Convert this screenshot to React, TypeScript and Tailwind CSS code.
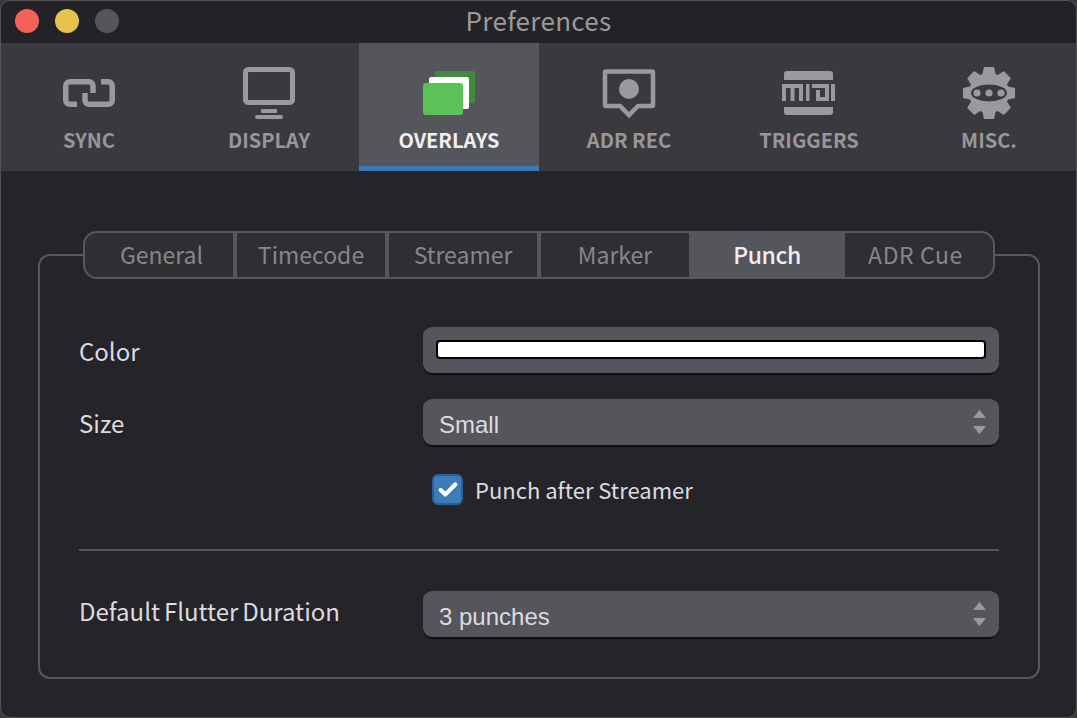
import React from 'react';
import { Check } from 'lucide-react';

const FG = '#9a999d';

const SyncIcon = () => (
  <svg viewBox="59 67 60 54" className="w-[60px] h-[54px]" fill="none" stroke={FG} strokeWidth={5.5}>
    <path d="M77 104.25H69.75a4 4 0 0 1-4-4V85.75a4 4 0 0 1 4-4H89a4 4 0 0 1 4 4V93" />
    <path d="M101 81.75H108.25a4 4 0 0 1 4 4V100.25a4 4 0 0 1-4 4H89a4 4 0 0 1-4-4V93" />
  </svg>
);

const DisplayIcon = () => (
  <svg viewBox="239 67 60 54" className="w-[60px] h-[54px]" fill={FG}>
    <rect x="245.5" y="69.5" width="47" height="33" rx="3" fill="none" stroke={FG} strokeWidth={5} />
    <rect x="261" y="109" width="16" height="4" rx="1" />
    <rect x="255" y="115" width="28" height="4" rx="2" />
  </svg>
);

const OverlaysIcon = () => (
  <svg viewBox="419 67 60 54" className="w-[60px] h-[54px]">
    <rect x="435" y="71" width="40" height="32" rx="2" fill="#3f8a3d" />
    <rect x="429" y="77" width="40" height="32" rx="2" fill="#ffffff" />
    <rect x="423" y="83" width="40" height="32" rx="3" fill="#5cc257" />
  </svg>
);

const AdrIcon = () => (
  <svg viewBox="599 67 60 54" className="w-[60px] h-[54px]">
    <path d="M606 71.5H652a1 1 0 0 1 1 1V105a1 1 0 0 1-1 1H638L629 115L620 106H606a1 1 0 0 1-1-1V72.5a1 1 0 0 1 1-1Z" fill="none" stroke={FG} strokeWidth={4.5} />
    <circle cx="629" cy="89" r="10" fill={FG} />
  </svg>
);

const MidiIcon = () => (
  <svg viewBox="779 67 60 54" className="w-[60px] h-[54px]" fill={FG}>
    <path d="M787 71H830a3 3 0 0 1 3 3V80H784V74a3 3 0 0 1 3-3Z" />
    <path d="M784 107H833V112a3 3 0 0 1-3 3H787a3 3 0 0 1-3-3Z" />
    <path d="M782 84H803V101H799V88H794.5V101H790.5V88H786V101H782Z" />
    <rect x="806" y="84" width="3.5" height="17" />
    <path d="M812 84H829V101H816V90H820V97H825V88H812Z" />
    <rect x="831" y="84" width="4" height="17" />
  </svg>
);

const MiscIcon = () => (
  <svg viewBox="959 67 60 54" className="w-[60px] h-[54px]">
    <circle cx="989" cy="93" r="20" fill={FG} />
    {[0, 45, 90, 135, 180, 225, 270, 315].map((deg) => (
      <path key={deg} d="M982 76L984 67H994L996 76Z" fill={FG} transform={`rotate(${deg} 989 93)`} />
    ))}
    <ellipse cx="989" cy="93" rx="18" ry="8.5" fill="#3a393e" />
    <circle cx="977" cy="93" r="3.6" fill={FG} />
    <circle cx="989" cy="93" r="3.6" fill={FG} />
    <circle cx="1001" cy="93" r="3.6" fill={FG} />
  </svg>
);

const toolbarItems = [
  { label: 'SYNC', icon: <SyncIcon /> },
  { label: 'DISPLAY', icon: <DisplayIcon /> },
  { label: 'OVERLAYS', icon: <OverlaysIcon />, active: true },
  { label: 'ADR REC', icon: <AdrIcon /> },
  { label: 'TRIGGERS', icon: <MidiIcon /> },
  { label: 'MISC.', icon: <MiscIcon /> },
];

const subTabs = [
  { label: 'General', className: 'w-[152px] border-r-4 border-[#58575d] pl-[5px] text-[#87868b]' },
  { label: 'Timecode', className: 'w-[152px] border-r-4 border-[#58575d] text-[#87868b]' },
  { label: 'Streamer', className: 'w-[152px] border-r-4 border-[#58575d] text-[#87868b]' },
  { label: 'Marker', className: 'w-[148px] text-[#87868b]' },
  { label: 'Punch', className: 'w-[156px] bg-[#55555c] font-medium tracking-[-0.4px] text-[#efeff1]' },
  { label: 'ADR Cue', className: 'w-[148px] pr-[7px] tracking-[0.6px] text-[#87868b]' },
];

const SelectBox = ({ value }: { value: string }) => (
  <div className="flex h-[46px] items-center justify-between rounded-[9px] bg-[#55555b] pl-4 pr-[13px] shadow-[0_2px_0_#111114]">
    <span className="font-['Liberation_Sans'] text-[24px] leading-none pt-[6px] text-[#dcdce0]">{value}</span>
    <svg viewBox="0 0 13 24" className="h-6 w-[13px]" fill="#9a9a9e">
      <path d="M6.5 0L13 8H0Z" />
      <path d="M6.5 24L0 16H13Z" />
    </svg>
  </div>
);

export default function App() {
  return (
    <div className="h-[718px] w-[1077px] overflow-hidden bg-[#3a3a3a] font-['Noto_Sans_CJK_SC','Noto_Sans',sans-serif]">
      <div className="flex h-full flex-col overflow-hidden rounded-[10px] border border-[#55545a] bg-[#252428]">
        <header className="relative flex h-[42px] shrink-0 items-center justify-center bg-[#232227]">
          <div className="absolute left-[14px] top-[8px] flex gap-4">
            <span className="h-6 w-6 rounded-full bg-[#f2625a]" />
            <span className="h-6 w-6 rounded-full bg-[#e7c24a]" />
            <span className="h-6 w-6 rounded-full bg-[#56555b]" />
          </div>
          <h1 className="pb-1 text-[26px] leading-none tracking-[0.3px] text-[#9b9a9e]">Preferences</h1>
        </header>

        <nav className="-ml-[2px] grid h-[128px] shrink-0 grid-cols-[repeat(6,180px)] bg-[#3a393e]">
          {toolbarItems.map((item) => (
            <div
              key={item.label}
              className={
                item.active
                  ? 'flex flex-col items-center border-b-[5px] border-[#3b7ab8] bg-[#55555c] pt-6'
                  : 'flex flex-col items-center border-b-[5px] border-transparent pt-6'
              }
            >
              {item.icon}
              <span
                className={
                  item.active
                    ? 'mt-[7px] text-[20px] font-bold leading-6 text-[#efeff1]'
                    : 'mt-[7px] text-[20px] font-bold leading-6 text-[#97969a]'
                }
              >
                {item.label}
              </span>
            </div>
          ))}
        </nav>

        <main className="flex flex-1 flex-col px-[37px] pt-[83px]">
          <section className="flex h-[425px] w-[1002px] flex-col rounded-[12px] border-2 border-[#58575d] px-[39px]">
            <div className="-mt-[25px] flex h-[48px] w-[912px] shrink-0 self-center overflow-hidden rounded-[14px] border-2 border-[#58575d] bg-[#2f2e33] text-[23px]">
              {subTabs.map((tab) => (
                <div key={tab.label} className={`flex items-center justify-center pb-[2px] ${tab.className}`}>
                  {tab.label}
                </div>
              ))}
            </div>

            <div className="mt-[48px] grid grid-cols-[344px_576px] items-center text-[24px] leading-[32px] text-[#dcdce0]">
              <span className="pt-[2px]">Color</span>
              <div className="flex h-[46px] items-center rounded-[9px] bg-[#55555b] px-[13px] pb-px shadow-[0_2px_0_#111114]">
                <div className="h-[19px] w-full rounded-[4px] border-2 border-black bg-white" />
              </div>
            </div>

            <div className="mt-[26px] grid grid-cols-[344px_576px] items-center text-[24px] leading-[32px] text-[#dcdce0]">
              <span className="pt-[2px]">Size</span>
              <SelectBox value="Small" />
            </div>

            <div className="ml-[353px] mt-[29px] flex h-[31px] items-center gap-3 text-[22px] leading-[32px] text-[#dcdce0]">
              <span className="flex h-[31px] w-[31px] items-center justify-center rounded-[6px] border-2 border-[#2f5f92] bg-[#3d7cbb]">
                <Check className="h-[22px] w-[22px] text-white" strokeWidth={4.5} />
              </span>
              <span className="pb-[2px]">Punch after Streamer</span>
            </div>

            <hr className="mt-[44px] border-t-2 border-[#58575d]" />

            <div className="mt-[40px] grid grid-cols-[344px_576px] items-center text-[24px] leading-[32px] text-[#dcdce0]">
              <span className="pb-[6px] [word-spacing:-1.5px]">Default Flutter Duration</span>
              <SelectBox value="3 punches" />
            </div>
          </section>
        </main>
      </div>
    </div>
  );
}
